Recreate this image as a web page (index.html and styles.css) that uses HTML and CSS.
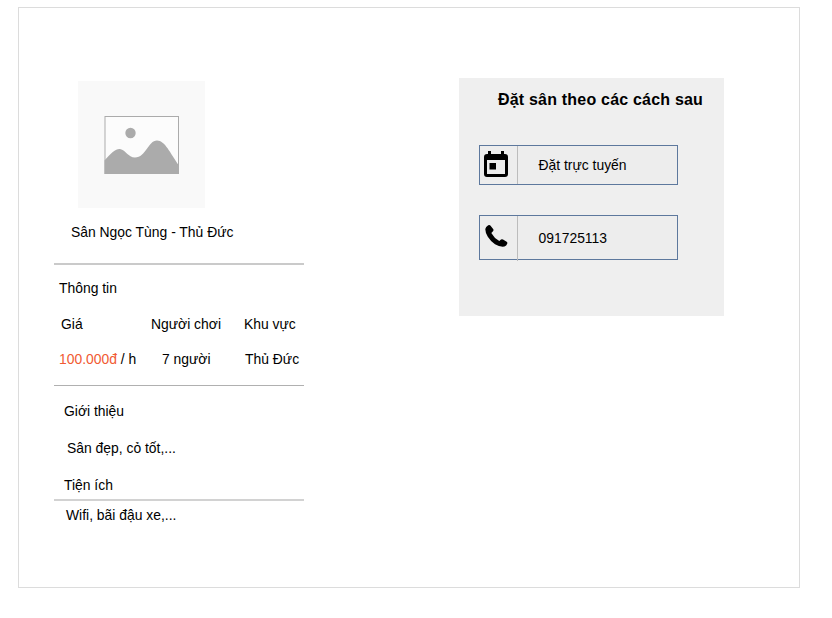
FILE: index.html
```html
<!DOCTYPE html>
<html lang="vi">
<head>
<meta charset="utf-8">
<title>Sân Ngọc Tùng</title>
<link rel="stylesheet" href="styles.css">
</head>
<body>
<main class="frame">
  <section class="field">
    <svg class="photo" viewBox="0 0 127 127" aria-hidden="true">
      <rect width="127" height="127" fill="#f9f9f9"/>
      <rect x="27" y="35.500" width="73.500" height="57" fill="#fcfcfc" stroke="#ababab"/>
      <circle cx="52.500" cy="52" r="5.200" fill="#ababab"/>
      <path d="M26.500 79.500C33 72 38 67.500 42 68C48 69 50 76.500 57 76.500C68 76.500 70 59.500 79 59.500C87 59.500 92 72 101 84.500V93H26.500Z" fill="#ababab"/>
    </svg>
    <h1 class="name">Sân Ngọc Tùng - Thủ Đức</h1>
    <hr class="rule soft">
    <h2 class="line heading">Thông tin</h2>
    <div class="grid labels"><span>Giá</span><span>Người chơi</span><span>Khu vực</span></div>
    <div class="grid values"><span><b class="price">100.000đ</b> / h</span><span>7 người</span><span>Thủ Đức</span></div>
    <hr class="rule">
    <h2 class="line about">Giới thiệu</h2>
    <p class="line about-text">Sân đẹp, cỏ tốt,...</p>
    <h2 class="line extras">Tiện ích</h2>
    <hr class="rule pale">
    <p class="line extras-text">Wifi, bãi đậu xe,...</p>
  </section>
  <aside class="booking">
    <h2 class="title">Đặt sân theo các cách sau</h2>
    <a class="option online">
      <span class="icon"><svg width="24" height="27" viewBox="0 0 24 27"><path fill-rule="evenodd" d="M4 0H7V3H17V0H20V3H21Q24 3 24 6V23Q24 26 21 26H3Q0 26 0 23V6Q0 3 3 3H4ZM3 9V23H21V9ZM5.500 12H12V18.500H5.500Z"/></svg></span>
      <span class="text">Đặt trực tuyến</span>
    </a>
    <a class="option phone">
      <span class="icon"><svg width="23" height="23" viewBox="0 0 23 23"><path d="M.3 4Q.6 1.800 3.200.3Q4.700-.4 5.600.8L8.300 4.300Q8.900 5.300 8 6.300L6.300 8Q9 13 14.300 16L16 14.500Q17 13.900 18 14.500L21.700 16.700Q22.700 17.500 22.200 18.700Q21.500 21 19.500 21.500Q15 22.300 10 19.200Q5.500 16.200 2.800 11.800Q.2 7.500.3 4Z"/></svg></span>
      <span class="text">091725113</span>
    </a>
  </aside>
</main>
</body>
</html>
```
FILE: styles.css
```css
* { box-sizing: border-box; }
body { margin: 0; background: #fff; color: #000; font: 13.9px/20px "Liberation Sans", Arial, sans-serif; }
h1, h2, p { margin: 0; font-size: 13.9px; font-weight: 400; white-space: nowrap; }
.frame { display: flex; align-items: flex-start; width: 782px; height: 581px; margin: 7px 0 0 18px; border: 1px solid #dcdcdc; }
.field { width: 250px; margin: 73px 0 0 35px; }
.photo { display: block; width: 127px; height: 127px; margin-left: 24px; }
.name { margin: 14px 0 0 17px; }
.rule { height: 1px; margin: 16px 0 0; border: 0; background: #b0b0b0; }
.soft { height: 2px; margin-top: 21px; background: #cacaca; }
.pale { height: 2px; margin-top: 4px; background: #d2d2d2; }
.heading { margin: 13px 0 0 5px; }
.grid { display: grid; grid-template-columns: 90px 93px 1fr; white-space: nowrap; }
.labels { margin: 16px 0 0 7px; }
.values { grid-template-columns: 103px 83px 1fr; margin: 15px 0 0 5px; }
.price { font-weight: 400; color: #f15a33; }
.about { margin: 15px 0 0 10px; }
.about-text { margin: 17px 0 0 13px; }
.extras { margin: 17px 0 0 10px; }
.extras-text { margin: 4px 0 0 12px; }
.booking { width: 265px; height: 238px; margin: 70px 0 0 155px; padding: 12px 0 0 20px; background: #efefef; }
.title { margin-left: 19px; font-size: 16px; font-weight: 700; letter-spacing: .2px; }
.option { display: flex; width: 199px; border: 1px solid #5d789d; background: #ededed; }
.online { height: 40px; margin-top: 35px; }
.phone { height: 45px; margin-top: 30px; }
.icon { width: 38px; padding: 5px 0 0 4px; border-right: 1px solid #bcbcbc; }
.phone .icon { height: 45px; padding: 9px 0 0 5px; }
.icon svg { display: block; }
.text { padding: 9px 0 0 20.500px; }
.phone .text { padding-top: 12px; }
```
